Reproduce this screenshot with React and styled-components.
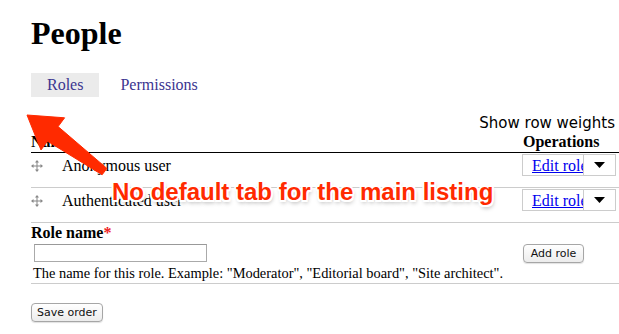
import React from "react";
import styled, { createGlobalStyle } from "styled-components";

const GlobalStyle = createGlobalStyle`
  body {
    margin: 0;
    background: #fff;
    font-family: "Liberation Serif", "Times New Roman", serif;
    font-size: 16px;
    color: #000;
  }
`;

const roles = [{ name: "Anonymous user" }, { name: "Authenticated user" }];

const Page = styled.div`
  position: relative;
  width: 619px;
  height: 334px;
  overflow: hidden;
  padding-left: 31px;
  box-sizing: border-box;
`;

const Title = styled.h1`
  margin: 0;
  padding-top: 15px;
  font-size: 32px;
  line-height: 36px;
  font-weight: bold;
`;

const Tabs = styled.ul`
  display: flex;
  gap: 5px;
  list-style: none;
  margin: 22px 0 0;
  padding: 0;
`;

const Tab = styled.li`
  padding: 0 16px;
  height: 24px;
  line-height: 24px;
  background: ${p => (p.$active ? "#ebebeb" : "transparent")};
  color: #3b3590;
`;

const WeightsToggle = styled.div`
  margin-top: 17px;
  padding-right: 4px;
  text-align: right;
  font-family: "DejaVu Sans", "Liberation Sans", sans-serif;
  font-size: 15px;
  line-height: 18px;
`;

const Table = styled.table`
  width: 100%;
  border-collapse: collapse;
`;

const HeadCell = styled.th`
  text-align: left;
  font-weight: bold;
  padding: 0 0 2px;
  height: 18px;
  line-height: 16px;
  vertical-align: bottom;
  border-bottom: 1px solid #000;
  & + & {
    width: 97px;
  }
`;

const HeadLabel = styled.span`
  display: block;
  padding-left: 1px;
`;

const Row = styled.tr`
  border-bottom: 1px solid #ccc;
  height: 35px;
`;

const Cell = styled.td`
  padding: 1px 0 0;
  vertical-align: top;
`;

const RoleName = styled.div`
  display: flex;
  align-items: center;
  gap: 19px;
  height: 22px;
  padding-top: 1px;
`;

const DropButton = styled.div`
  display: flex;
  width: 94px;
  height: 22px;
  border: 1px solid #ccc;
  box-sizing: border-box;
`;

const DropLink = styled.a`
  flex: 0 0 61px;
  box-sizing: border-box;
  padding-left: 9px;
  overflow: hidden;
  white-space: nowrap;
  color: #0000ee;
  text-decoration: underline;
  line-height: 21px;
  border-right: 1px solid #ccc;
`;

const DropToggle = styled.span`
  flex: 1;
  display: flex;
  align-items: center;
  justify-content: center;
`;

const AddForm = styled.div`
  display: flex;
  align-items: flex-start;
  padding: 1px 0 2px;
  border-bottom: 1px solid #ccc;
`;

const FieldBlock = styled.div`
  flex: 1;
`;

const FieldLabel = styled.label`
  display: block;
  font-weight: bold;
  line-height: 18px;
`;

const Required = styled.span`
  color: #e22;
`;

const TextInput = styled.input`
  display: block;
  width: 173px;
  height: 18px;
  box-sizing: border-box;
  margin: 2px 0 0 3px;
  border: 1px solid #aaa;
  border-top-color: #999;
`;

const Description = styled.div`
  font-size: 14.4px;
  line-height: 16px;
  margin-top: 3px;
  margin-left: 2px;
`;

const Button = styled.button`
  font-family: "DejaVu Sans", "Liberation Sans", sans-serif;
  font-size: 11px;
  height: 19px;
  padding: 0 5px;
  white-space: nowrap;
  border: 1px solid #a6a6a6;
  border-radius: 4px;
  background: linear-gradient(#ffffff, #ececec);
  box-shadow: 0 1px 1px rgba(0, 0, 0, 0.12);
  color: #111;
  ${p => p.$add && "margin: 20px 35px 0 0; width: 61px;"}
`;

const Actions = styled.div`
  margin-top: 18px;
`;

const Annotation = styled.div`
  position: absolute;
  left: 112px;
  top: 178px;
  font-family: "Liberation Sans", Arial, sans-serif;
  font-weight: bold;
  font-size: 24px;
  color: #ff2a00;
  white-space: nowrap;
  text-shadow: -2px 0 #fff, 2px 0 #fff, 0 -2px #fff, 0 2px #fff, -1.5px -1.5px #fff,
    1.5px 1.5px #fff, -1.5px 1.5px #fff, 1.5px -1.5px #fff, 1px 3px 4px rgba(0, 0, 0, 0.35);
`;

const ArrowSvg = styled.svg`
  position: absolute;
  left: 0;
  top: 0;
  pointer-events: none;
`;

const DragHandle = () => (
  <svg width="12" height="12" viewBox="0 0 12 12">
    <g fill="#888">
      <rect x="5.5" y="1" width="1" height="10" />
      <rect x="1" y="5.5" width="10" height="1" />
      <path d="M6 0 L8 2.5 H4 Z" />
      <path d="M6 12 L8 9.5 H4 Z" />
      <path d="M0 6 L2.5 4 V8 Z" />
      <path d="M12 6 L9.5 4 V8 Z" />
    </g>
  </svg>
);

const Caret = () => (
  <svg width="11" height="6" viewBox="0 0 11 6">
    <path d="M0 0 H11 L5.5 6 Z" fill="#000" />
  </svg>
);

export default function App() {
  return (
    <>
      <GlobalStyle />
      <Page>
        <Title>People</Title>
        <Tabs>
          <Tab $active>Roles</Tab>
          <Tab>Permissions</Tab>
        </Tabs>
        <WeightsToggle>Show row weights</WeightsToggle>
        <Table>
          <thead>
            <tr>
              <HeadCell>Name</HeadCell>
              <HeadCell>
                <HeadLabel>Operations</HeadLabel>
              </HeadCell>
            </tr>
          </thead>
          <tbody>
            {roles.map(role => (
              <Row key={role.name}>
                <Cell>
                  <RoleName>
                    <DragHandle />
                    {role.name}
                  </RoleName>
                </Cell>
                <Cell>
                  <DropButton>
                    <DropLink href="#">Edit role</DropLink>
                    <DropToggle>
                      <Caret />
                    </DropToggle>
                  </DropButton>
                </Cell>
              </Row>
            ))}
          </tbody>
        </Table>
        <AddForm>
          <FieldBlock>
            <FieldLabel>
              Role name<Required>*</Required>
            </FieldLabel>
            <TextInput type="text" />
            <Description>
              The name for this role. Example: "Moderator", "Editorial board", "Site architect".
            </Description>
          </FieldBlock>
          <Button $add>Add role</Button>
        </AddForm>
        <Actions>
          <Button>Save order</Button>
        </Actions>
        <ArrowSvg width="619" height="334">
          <polygon
            points="27,115 64.6,117.8 58.1,126.6 106.9,168.4 102.1,174.8 47.5,141.2 41,150"
            fill="#ff2a00"
            stroke="#ff2a00"
            strokeWidth="1"
            strokeLinejoin="round"
          />
        </ArrowSvg>
        <Annotation>No default tab for the main listing</Annotation>
      </Page>
    </>
  );
}
